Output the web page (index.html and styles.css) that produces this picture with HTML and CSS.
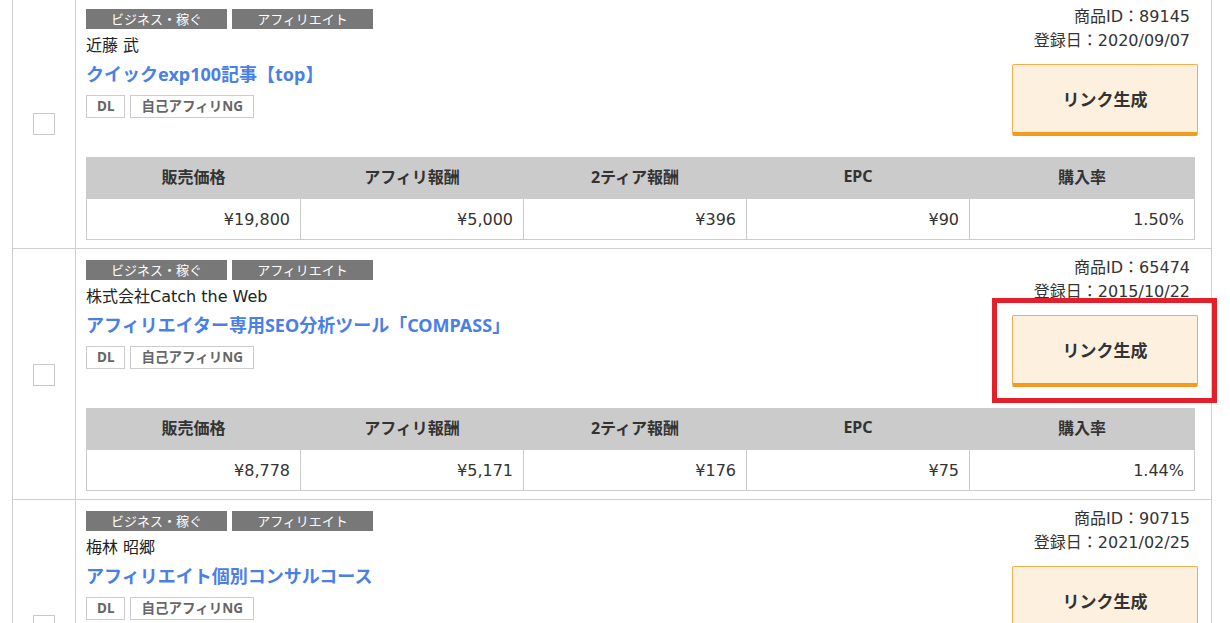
FILE: index.html
```html
<!DOCTYPE html>
<html lang="ja">
<head>
<meta charset="utf-8">
<title>商品一覧</title>
<link rel="stylesheet" href="styles.css">
</head>
<body>
<div class="list">
  <div class="item">
    <div class="check-col"><span class="checkbox"></span></div>
    <div class="main">
      <div class="top">
        <div class="info">
          <div class="tags"><span class="tag">ビジネス・稼ぐ</span><span class="tag">アフィリエイト</span></div>
          <div class="author">近藤 武</div>
          <a class="title" href="#">クイックexp100記事【top】</a>
          <div class="badges"><span class="badge">DL</span><span class="badge">自己アフィリNG</span></div>
        </div>
        <div class="side">
          <div class="meta">商品ID：89145</div>
          <div class="meta">登録日：2020/09/07</div>
          <div class="btn-wrap"><button class="btn">リンク生成</button></div>
        </div>
      </div>
      <table class="stats">
        <colgroup><col class="c1"><col class="c2"><col class="c3"><col class="c4"><col class="c5"></colgroup>
        <thead><tr><th>販売価格</th><th>アフィリ報酬</th><th>2ティア報酬</th><th>EPC</th><th>購入率</th></tr></thead>
        <tbody><tr><td>¥19,800</td><td>¥5,000</td><td>¥396</td><td>¥90</td><td>1.50%</td></tr></tbody>
      </table>
    </div>
  </div>
  <div class="item">
    <div class="check-col"><span class="checkbox"></span></div>
    <div class="main">
      <div class="top">
        <div class="info">
          <div class="tags"><span class="tag">ビジネス・稼ぐ</span><span class="tag">アフィリエイト</span></div>
          <div class="author">株式会社Catch the Web</div>
          <a class="title" href="#">アフィリエイター専用SEO分析ツール「COMPASS」</a>
          <div class="badges"><span class="badge">DL</span><span class="badge">自己アフィリNG</span></div>
        </div>
        <div class="side">
          <div class="meta">商品ID：65474</div>
          <div class="meta">登録日：2015/10/22</div>
          <div class="btn-wrap"><button class="btn">リンク生成</button><span class="highlight"></span></div>
        </div>
      </div>
      <table class="stats">
        <colgroup><col class="c1"><col class="c2"><col class="c3"><col class="c4"><col class="c5"></colgroup>
        <thead><tr><th>販売価格</th><th>アフィリ報酬</th><th>2ティア報酬</th><th>EPC</th><th>購入率</th></tr></thead>
        <tbody><tr><td>¥8,778</td><td>¥5,171</td><td>¥176</td><td>¥75</td><td>1.44%</td></tr></tbody>
      </table>
    </div>
  </div>
  <div class="item">
    <div class="check-col"><span class="checkbox"></span></div>
    <div class="main">
      <div class="top">
        <div class="info">
          <div class="tags"><span class="tag">ビジネス・稼ぐ</span><span class="tag">アフィリエイト</span></div>
          <div class="author">梅林 昭郷</div>
          <a class="title" href="#">アフィリエイト個別コンサルコース</a>
          <div class="badges"><span class="badge">DL</span><span class="badge">自己アフィリNG</span></div>
        </div>
        <div class="side">
          <div class="meta">商品ID：90715</div>
          <div class="meta">登録日：2021/02/25</div>
          <div class="btn-wrap"><button class="btn">リンク生成</button></div>
        </div>
      </div>
    </div>
  </div>
</div>
</body>
</html>
```
FILE: styles.css
```css
* { box-sizing: border-box; }
html, body { margin: 0; padding: 0; background: #fff; }
body {
  font-family: "DejaVu Sans", "Noto Sans CJK JP", sans-serif;
  color: #333;
  font-size: 16px;
  overflow: hidden;
}
.list {
  margin: -3px 0 0 12px;
  width: 1200px;
  border-top: 1px solid #cfcfcf;
}
.item {
  display: flex;
  border-left: 1px solid #cfcfcf;
  border-right: 1px solid #cfcfcf;
  border-bottom: 1px solid #cfcfcf;
  height: 251px;
}
.check-col {
  width: 63px;
  flex: none;
  border-right: 1px solid #cfcfcf;
  display: flex;
  align-items: center;
  justify-content: center;
  padding-top: 2px;
}
.checkbox {
  width: 22px;
  height: 22px;
  border: 1px solid #c8c8c8;
  background: #fff;
  display: block;
}
.main {
  flex: 1;
  padding: 0 13px 0 10px;
}
.top {
  display: flex;
  justify-content: space-between;
}
.info { padding-top: 11px; }
.tags { display: flex; gap: 5px; }
.tag {
  width: 141px;
  height: 20px;
  line-height: 20px;
  background: #787878;
  color: #fff;
  font-size: 13px;
  text-align: center;
  font-family: "Noto Sans CJK JP", sans-serif;
}
.author {
  margin-top: 5px;
  line-height: 24px;
  font-size: 16px;
  color: #222;
}
.title {
  display: block;
  margin-top: 2px;
  line-height: 28px;
  font-size: 18px;
  font-weight: 700;
  color: #4a80e6;
  text-decoration: none;
  font-family: "Noto Sans", "Noto Sans CJK JP", sans-serif;
}
.badges { display: flex; gap: 5px; margin-top: 7px; }
.badge {
  height: 23px;
  line-height: 21px;
  padding: 0 10px;
  border: 1px solid #cccccc;
  font-size: 13.5px;
  font-weight: 700;
  color: #666;
  font-family: "Noto Sans", "Noto Sans CJK JP", sans-serif;
}
.side {
  padding-top: 7px;
  display: flex;
  flex-direction: column;
  align-items: flex-end;
}
.meta {
  line-height: 24px;
  font-size: 16px;
  padding-right: 8px;
  color: #333;
}
.btn-wrap {
  position: relative;
  margin-top: 11px;
}
.btn {
  display: block;
  width: 186px;
  height: 72px;
  background: #fef0df;
  border: 1px solid #f2ad4e;
  border-bottom: 4px solid #f39a1f;
  border-radius: 2px;
  font-family: "Noto Sans CJK JP", sans-serif;
  font-size: 17px;
  font-weight: 700;
  color: #333;
  padding: 0;
}
.highlight {
  position: absolute;
  top: -17px;
  left: -20px;
  right: -19px;
  bottom: -16px;
  border: 5px solid #e3202a;
  pointer-events: none;
}
.stats {
  margin-top: 21px;
  width: 1108px;
  border-collapse: collapse;
  table-layout: fixed;
}
.c1 { width: 214px; }
.c2, .c3, .c4 { width: 223px; }
.c5 { width: 225px; }
.stats th, .stats td {
  height: 41px;
  padding: 0;
  font-size: 16px;
}
.stats th {
  background: #cbcbcb;
  font-weight: 700;
  text-align: center;
  border: 1px solid #cbcbcb;
  border-left-color: #e6e6e6;
  color: #333;
  padding-bottom: 4px;
  font-family: "Noto Sans", "Noto Sans CJK JP", sans-serif;
}
.stats th:first-child { border-left-color: #cbcbcb; }
.stats td {
  border: 1px solid #cbcbcb;
  text-align: right;
  padding-right: 10px;
  color: #333;
}
```
